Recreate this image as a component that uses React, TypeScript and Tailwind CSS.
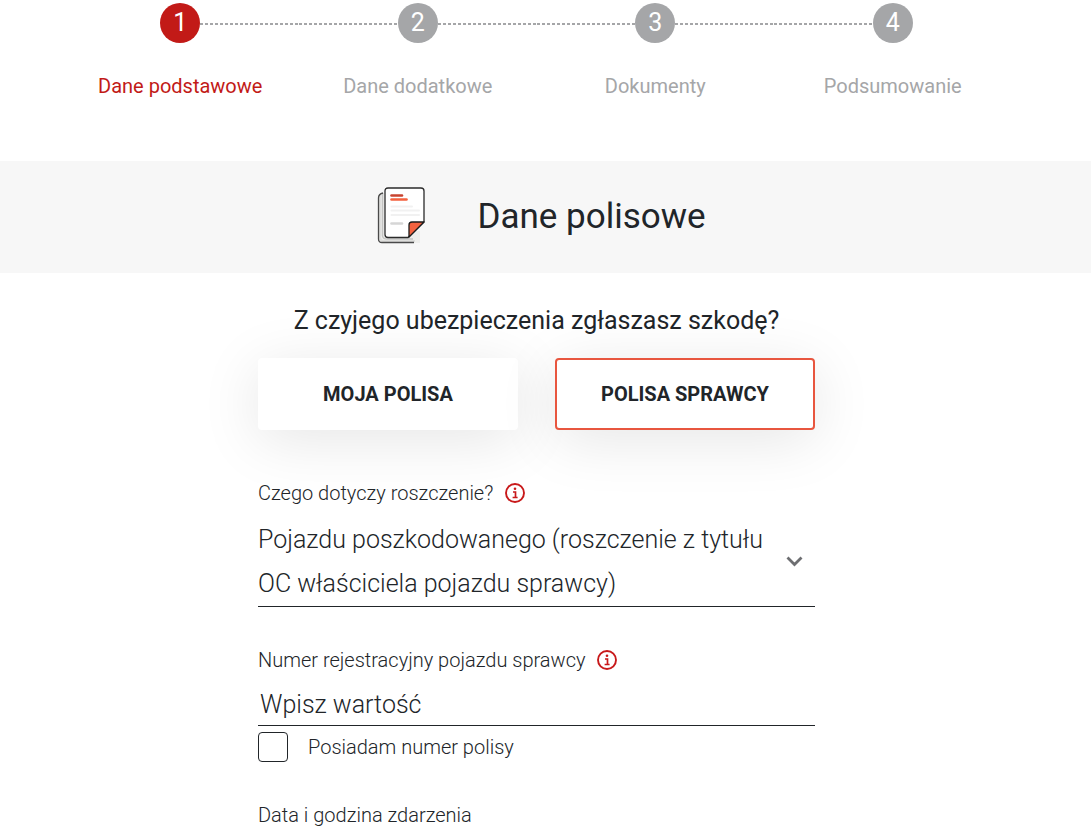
import { useState } from 'react';
import clsx from 'clsx';

const steps = ['Dane podstawowe', 'Dane dodatkowe', 'Dokumenty', 'Podsumowanie'];

const policies = [
  { id: 'own', label: 'MOJA POLISA' },
  { id: 'other', label: 'POLISA SPRAWCY' },
];

const dotted = 'bg-[repeating-linear-gradient(to_right,#a5a6a8_0_3px,transparent_3px_5px)]';

function Stepper({ current }: { current: number }) {
  return (
    <ol className="mx-auto grid w-full max-w-[950px] grid-cols-4">
      {steps.map((step, i) => (
        <li key={step} className="flex flex-col items-center gap-7">
          <div className="flex w-full items-center">
            <span className={clsx('mt-0.5 h-0.5 flex-1', i > 0 && dotted)} />
            <span
              className={clsx(
                'flex size-10 items-center justify-center rounded-full text-[25px] text-white',
                i === current ? 'bg-[#c21a17]' : 'bg-[#a5a6a8]',
              )}
            >
              {i + 1}
            </span>
            <span className={clsx('mt-0.5 h-0.5 flex-1', i < steps.length - 1 && dotted)} />
          </div>
          <span className={clsx('text-xl leading-[30px]', i === current ? 'text-[#c21a17]' : 'text-[#a5a6a8]')}>
            {step}
          </span>
        </li>
      ))}
    </ol>
  );
}

function PolicyIcon() {
  return (
    <svg width="50" height="60" viewBox="0 0 50 60" fill="none" aria-hidden="true">
      <path d="M7 6H5Q1 7 1 11V51Q1 56 5 56H43V44H8Z" fill="#eeeeec" />
      <path d="M3 8V50Q3 54 7 54H38" stroke="#dededc" strokeWidth="2" />
      <path d="M5.500 6V49Q6 52 10 52H36" stroke="#c4c4c2" strokeWidth="1.500" />
      <path d="M6 6Q1.500 7 1.500 11V52Q1.500 55.500 5 55.500H37" stroke="#4a4a4a" strokeWidth="1.300" />
      <path d="M11 1H44Q47 1 47 4V35L31 50.500H11Q8 50.500 8 47.500V4Q8 1 11 1Z" fill="#fff" stroke="#2b2b2b" strokeWidth="1.300" />
      <path d="M47 35H35Q32 35 32 38V50Z" fill="#f4623f" stroke="#1c1c1c" strokeWidth="1.300" strokeLinejoin="round" />
      <path d="M14.500 8.500H25" stroke="#c8432f" strokeWidth="2.600" strokeLinecap="round" />
      <path d="M14.500 12.500H29.500" stroke="#f4623f" strokeWidth="2.600" strokeLinecap="round" />
      <path d="M14.500 19.500H35M14.500 23.500H42M14.500 28H42" stroke="#f1f1f1" strokeWidth="2" strokeLinecap="round" />
      <path d="M14.500 36.500H25" stroke="#d6d6d6" strokeWidth="2.600" strokeLinecap="round" />
    </svg>
  );
}

function InfoButton({ label }: { label: string }) {
  return (
    <button type="button" aria-label={label} className="text-[#c8191a]">
      <svg width="20" height="20" viewBox="0 0 20 20" fill="none" aria-hidden="true">
        <circle cx="10" cy="10" r="9" stroke="currentColor" strokeWidth="1.900" />
        <circle cx="10" cy="5.800" r="1.300" fill="currentColor" />
        <path d="M8 9H10.500V14.200M7.600 14.500H12.600" stroke="currentColor" strokeWidth="1.700" />
      </svg>
    </button>
  );
}

export default function App() {
  const [policy, setPolicy] = useState('other');

  return (
    <div className="bg-white font-['Roboto',sans-serif] text-[#212529]">
      <header className="pt-[3px] pr-[18px] pb-[60px]">
        <Stepper current={0} />
      </header>

      <div className="flex h-28 items-center justify-center gap-[50px] bg-[#f7f7f7] pr-2">
        <PolicyIcon />
        <h1 className="text-[35px] leading-10">Dane polisowe</h1>
      </div>

      <main className="pt-7 pr-[18px]">
        <form className="mx-auto flex w-full max-w-[557px] flex-col">
          <fieldset>
            <legend className="w-full text-center text-[25px] leading-10">Z czyjego ubezpieczenia zgłaszasz szkodę?</legend>
            <div className="mt-[17px] grid grid-cols-2 gap-[37px]">
              {policies.map((p) => (
                <button
                  key={p.id}
                  type="button"
                  aria-pressed={policy === p.id}
                  onClick={() => setPolicy(p.id)}
                  className={clsx(
                    'h-[72px] rounded border-2 bg-white text-xl font-bold shadow-[0_10px_60px_rgba(0,0,0,0.1)]',
                    policy === p.id ? 'border-[#e8563f]' : 'border-transparent',
                  )}
                >
                  {p.label}
                </button>
              ))}
            </div>
          </fieldset>

          <div className="mt-12 flex items-center gap-3">
            <label htmlFor="subject" className="text-xl leading-[30px] font-light">
              Czego dotyczy roszczenie?
            </label>
            <InfoButton label="Informacja o roszczeniu" />
          </div>
          <div className="mt-2.5 grid items-center border-b border-[#212529]">
            <select
              id="subject"
              className="col-start-1 row-start-1 h-[88px] w-full appearance-none bg-transparent pr-12 text-[25px] leading-[44px] font-light whitespace-normal outline-none"
            >
              <option>Pojazdu poszkodowanego (roszczenie z tytułu OC właściciela pojazdu sprawcy)</option>
            </select>
            <svg
              width="17"
              height="12"
              viewBox="0 0 17 12"
              fill="none"
              aria-hidden="true"
              className="pointer-events-none col-start-1 row-start-1 mr-3 justify-self-end"
            >
              <path d="M1.500 1.500L8.500 8.500L15.500 1.500" stroke="#6d6e71" strokeWidth="2.800" />
            </svg>
          </div>

          <div className="mt-[38px] flex items-center gap-3">
            <label htmlFor="plate" className="text-xl leading-[30px] font-light">
              Numer rejestracyjny pojazdu sprawcy
            </label>
            <InfoButton label="Informacja o numerze rejestracyjnym" />
          </div>
          <input
            id="plate"
            type="text"
            placeholder="Wpisz wartość"
            className="mt-2 h-[43px] border-b border-[#212529] px-0.5 text-[25px] font-light outline-none placeholder:text-[#212529]"
          />

          <label className="mt-1.5 flex items-center gap-5 text-xl leading-[30px] font-light">
            <input type="checkbox" className="size-[30px] appearance-none rounded border border-[#212529] checked:bg-[#c21a17]" />
            Posiadam numer polisy
          </label>

          <p className="mt-[38px] text-xl leading-[30px] font-light">Data i godzina zdarzenia</p>
        </form>
      </main>
    </div>
  );
}
